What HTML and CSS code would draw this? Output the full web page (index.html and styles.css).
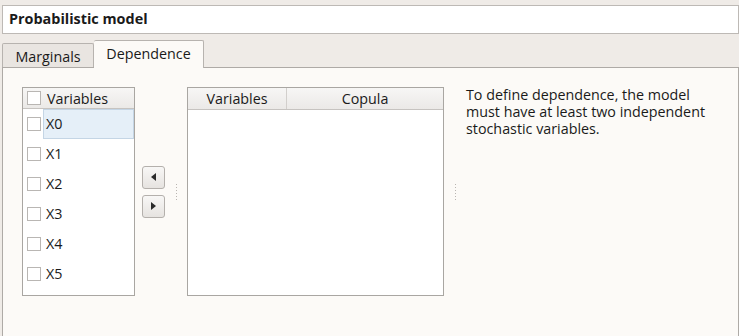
FILE: index.html
```html
<!DOCTYPE html>
<html>
<head>
<meta charset="utf-8">
<link rel="stylesheet" href="styles.css">
</head>
<body>
<div class="title">Probabilistic model</div>
<div class="tabs">
  <div class="tab">Marginals</div>
  <div class="tab active">Dependence</div>
</div>
<div class="pane">
  <div class="content">
    <div class="list">
      <div class="list-head"><span class="cb"></span><span>Variables</span></div>
      <div class="row"><span class="cb"></span><span class="label sel">X0</span></div>
      <div class="row"><span class="cb"></span><span class="label">X1</span></div>
      <div class="row"><span class="cb"></span><span class="label">X2</span></div>
      <div class="row"><span class="cb"></span><span class="label">X3</span></div>
      <div class="row"><span class="cb"></span><span class="label">X4</span></div>
      <div class="row"><span class="cb"></span><span class="label">X5</span></div>
    </div>
    <div class="buttons">
      <div class="btn"><span class="tri left"></span></div>
      <div class="btn"><span class="tri right"></span></div>
    </div>
    <div class="splitter"><span class="dots"></span></div>
    <div class="table">
      <div class="thead">
        <div class="th c1">Variables</div>
        <div class="th c2">Copula</div>
      </div>
    </div>
    <div class="splitter"><span class="dots"></span></div>
    <div class="msg">To define dependence, the model<br>must have at least two independent<br>stochastic variables.</div>
  </div>
</div>
</body>
</html>
```
FILE: styles.css
```css
html, body {
  margin: 0;
  padding: 0;
  height: 336px;
  overflow: hidden;
}
body {
  background: #efebe7;
  font-family: "Open Sans", "DejaVu Sans", sans-serif;
  font-size: 14.3px;
  color: #1a1a1a;
}
.title {
  margin: 5px 0 0 2px;
  box-sizing: border-box;
  height: 29px;
  border: 1px solid #bdb9b5;
  background: #fff;
  padding-left: 6px;
  font-weight: bold;
  line-height: 26px;
  font-size: 14.4px;
}
.tabs {
  display: flex;
  align-items: flex-end;
  margin: 6px 0 0 2px;
  height: 27px;
}
.tab {
  box-sizing: border-box;
  height: 24px;
  width: 92px;
  border: 1px solid #b7b3af;
  border-bottom: none;
  border-radius: 2px 2px 0 0;
  background: #e9e5e1;
  text-align: center;
  line-height: 25px;
}
.tab.active {
  height: 28px;
  width: 110px;
  background: #fcfaf7;
  border-left: none;
  margin-bottom: -1px;
  position: relative;
  line-height: 26px;
}
.pane {
  margin-left: 2px;
  height: 269px;
  border-top: 1px solid #aeaaa6;
  border-left: 1px solid #aeaaa6;
  border-right: 1px solid #aeaaa6;
  background: #fcfaf7;
  padding: 19px 0 0 19px;
  box-sizing: border-box;
  width: 737px;
}
.content {
  display: flex;
  align-items: center;
  height: 209px;
}
.list {
  box-sizing: border-box;
  width: 113px;
  height: 209px;
  border: 1px solid #a9a6a2;
  background: #fff;
  flex: none;
}
.list-head {
  display: flex;
  align-items: center;
  height: 20px;
  border-bottom: 1px solid #c6c3c0;
  background: linear-gradient(#f7f6f5, #ebe9e7);
}
.list-head .cb {
  margin: 0 6px 0 4px;
}
.cb {
  display: inline-block;
  box-sizing: border-box;
  width: 14px;
  height: 14px;
  border: 1px solid #b9b6b3;
  background: #fff;
  flex: none;
}
.row {
  display: flex;
  align-items: center;
  height: 30px;
}
.row .cb {
  margin: 0 2px 0 4px;
}
.label {
  flex: 1;
  height: 30px;
  line-height: 30px;
  padding-left: 3px;
  box-sizing: border-box;
}
.label.sel {
  background: #e5eff8;
  border: 1px solid #c4d5e5;
  line-height: 28px;
  padding-left: 2px;
}
.buttons {
  display: flex;
  flex-direction: column;
  gap: 6px;
  margin-left: 7px;
  flex: none;
}
.btn {
  box-sizing: border-box;
  width: 23px;
  height: 23px;
  border: 1px solid #b4b0ac;
  border-radius: 3px;
  background: linear-gradient(#f8f7f6, #e6e3e0);
  display: flex;
  align-items: center;
  justify-content: center;
}
.tri {
  width: 0;
  height: 0;
  border-top: 4px solid transparent;
  border-bottom: 4px solid transparent;
}
.tri.left {
  border-right: 5px solid #2a2a2a;
}
.tri.right {
  border-left: 5px solid #2a2a2a;
}
.splitter {
  width: 22px;
  display: flex;
  justify-content: center;
  flex: none;
}
.dots {
  width: 1px;
  height: 16px;
  background: repeating-linear-gradient(#b9b5b1 0 1px, transparent 1px 3px);
}
.table {
  box-sizing: border-box;
  width: 257px;
  height: 209px;
  border: 1px solid #a9a6a2;
  background: #fff;
  flex: none;
}
.thead {
  display: flex;
  height: 21px;
  border-bottom: 1px solid #c6c3c0;
  background: linear-gradient(#f7f6f5, #ebe9e7);
}
.th {
  text-align: center;
  line-height: 21px;
  box-sizing: border-box;
}
.th.c1 {
  width: 99px;
  border-right: 1px solid #d2cfcc;
}
.th.c2 {
  flex: 1;
}
.msg {
  align-self: flex-start;
  line-height: 17px;
  margin-top: -1px;
}
```
